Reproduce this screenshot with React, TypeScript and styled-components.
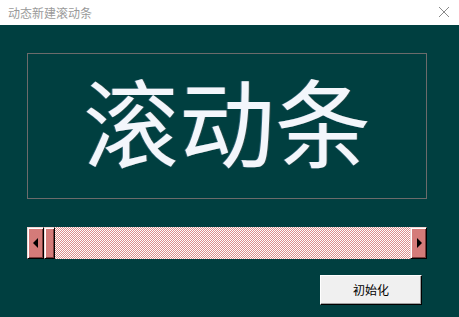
import React from "react";
import styled, { createGlobalStyle } from "styled-components";

const GlobalStyle = createGlobalStyle`
  html, body {
    margin: 0;
    padding: 0;
    background: #ffffff;
  }
  body {
    font-family: "Noto Sans CJK SC", "Noto Sans", sans-serif;
  }
`;

const Window = styled.div`
  width: 459px;
  height: 317px;
  display: flex;
  flex-direction: column;
  overflow: hidden;
`;

const TitleBar = styled.div`
  height: 25px;
  flex: none;
  background: #ffffff;
  display: flex;
  align-items: center;
  justify-content: space-between;
  padding: 0 9px 1px 8px;
  box-sizing: border-box;
`;

const Title = styled.span`
  font-size: 12px;
  color: #9a9a9a;
`;

const CloseIcon = styled.svg`
  width: 12px;
  height: 12px;
  display: block;
`;

const Body = styled.div`
  flex: 1;
  background: #003f40;
  padding: 28px 0 0 27px;
  display: flex;
  flex-direction: column;
`;

const Display = styled.div`
  width: 400px;
  height: 146px;
  box-sizing: border-box;
  border: 1px solid #6b6b6b;
  display: flex;
  align-items: center;
  justify-content: center;
  padding-bottom: 14px;
`;

const BigText = styled.span`
  font-size: 96px;
  line-height: 1;
  color: #f3f6fb;
  text-shadow: -1px 0 0 rgba(120, 170, 230, 0.35), 1px 0 0 rgba(200, 120, 90, 0.25);
`;

const ScrollBar = styled.div`
  margin-top: 28px;
  width: 400px;
  height: 32px;
  display: flex;
`;

const RaisedPart = styled.div<{ $width: number }>`
  width: ${(p) => p.$width}px;
  flex: none;
  box-sizing: border-box;
  background: #d47b79;
  border-top: 1px solid #f2d6d5;
  border-left: 1px solid #f2d6d5;
  border-right: 1px solid #000000;
  border-bottom: 1px solid #000000;
  box-shadow: inset 1px 1px 0 #ffffff, inset -1px -1px 0 #7a3a39;
  display: flex;
  align-items: center;
  justify-content: center;
`;

const Track = styled.div`
  flex: 1;
  background: repeating-conic-gradient(#dc8e8c 0 25%, #ffffff 0 50%) 0 0 / 2px 2px;
`;

const Arrow = styled.div<{ $dir: "left" | "right" }>`
  width: 0;
  height: 0;
  border-top: 5px solid transparent;
  border-bottom: 5px solid transparent;
  ${(p) =>
    p.$dir === "left"
      ? "border-right: 5px solid #000000; margin-right: 1px;"
      : "border-left: 5px solid #000000; margin-left: 1px;"}
`;

const ButtonRow = styled.div`
  width: 395px;
  margin-top: 16px;
  display: flex;
  justify-content: flex-end;
`;

const PushButton = styled.button`
  width: 102px;
  height: 30px;
  box-sizing: border-box;
  background: #f0f0f0;
  border: none;
  border-top: 1px solid #ffffff;
  border-left: 1px solid #ffffff;
  border-right: 1px solid #000000;
  border-bottom: 1px solid #000000;
  box-shadow: inset -1px -1px 0 #a0a0a0;
  font-family: "Noto Sans CJK SC", "Noto Sans", sans-serif;
  font-size: 12px;
  color: #000000;
  padding: 0 0 1px 0;
`;

export default function App() {
  return (
    <>
      <GlobalStyle />
      <Window>
        <TitleBar>
          <Title>动态新建滚动条</Title>
          <CloseIcon viewBox="0 0 12 12">
            <path d="M1 1 L11 11 M11 1 L1 11" stroke="#8a8a8a" strokeWidth="1" fill="none" />
          </CloseIcon>
        </TitleBar>
        <Body>
          <Display>
            <BigText>滚动条</BigText>
          </Display>
          <ScrollBar>
            <RaisedPart $width={17}>
              <Arrow $dir="left" />
            </RaisedPart>
            <RaisedPart $width={11} />
            <Track />
            <RaisedPart $width={17}>
              <Arrow $dir="right" />
            </RaisedPart>
          </ScrollBar>
          <ButtonRow>
            <PushButton>初始化</PushButton>
          </ButtonRow>
        </Body>
      </Window>
    </>
  );
}
